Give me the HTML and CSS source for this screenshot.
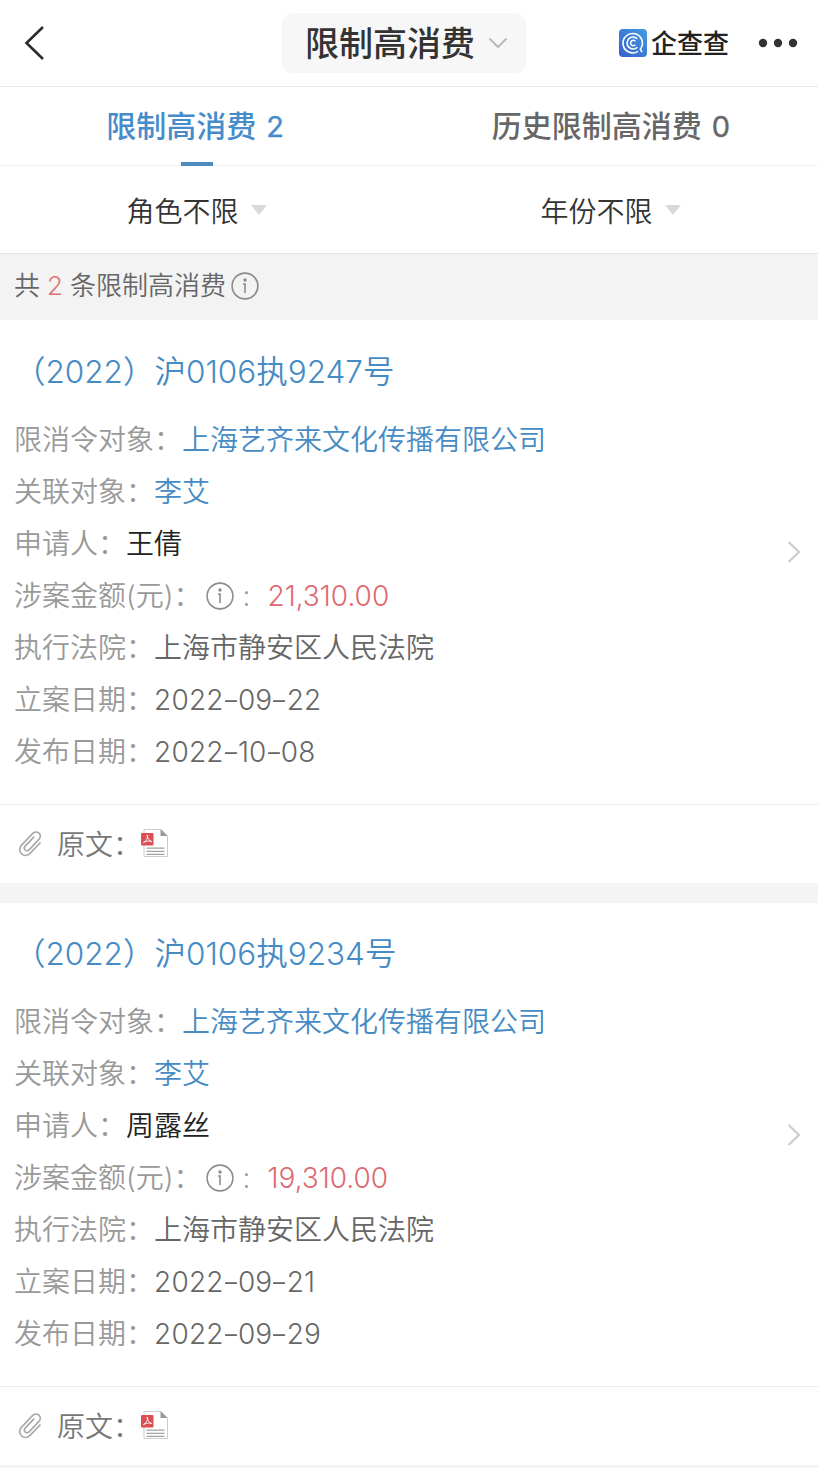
FILE: index.html
```html
<!DOCTYPE html>
<html lang="zh-CN">
<head>
    <meta charset="UTF-8">
    <meta name="viewport" content="width=device-width, initial-scale=1.0">
    <title>限制高消费</title>
    <link rel="stylesheet" href="styles.css">
</head>
<body>
    <svg class="sprite" width="0" height="0">
        <symbol id="info" viewBox="0 0 28 28">
            <circle cx="14" cy="14" r="12.9" fill="none" stroke="currentColor" stroke-width="1.6"/>
            <circle cx="14" cy="8" r="1.7" fill="currentColor"/>
            <path d="M12 12h2v9" fill="none" stroke="currentColor" stroke-width="1.6"/>
        </symbol>
        <symbol id="arrow" viewBox="0 0 14 24">
            <path d="M1.5 2l10.5 10L1.5 22" fill="none" stroke="currentColor" stroke-width="2.2"/>
        </symbol>
        <symbol id="clip" viewBox="0 0 24 28">
            <path d="M22.5 13.5l-10.2 10.7c-2.6 2.7-6.2 3-8.7 .7s-2.5-6 0-8.7L14.5 4.7c1.9-2 4.7-2.3 6.5-.6s1.7 4.4-.1 6.3l-9.6 10.2c-1.3 1.4-3.1 1.5-4.2 .4s-1-2.7 .3-4.1l8.8-9.3" fill="none" stroke="currentColor" stroke-width="1.7"/>
        </symbol>
        <symbol id="pdf" viewBox="0 0 28 30">
            <path d="M3 1.5h17l6.5 6.5v20.5H3z" fill="#fff" stroke="#ccc" stroke-width="1"/>
            <path d="M19.5 1v7h7z" fill="#999"/>
            <path d="M5.5 20.2h18M5.5 23.3h18M5.5 26.3h18" stroke="#a3a3a3" stroke-width="1.3"/>
            <rect x="0" y="5" width="12.5" height="12.5" rx="1" fill="#dd4f55"/>
            <path d="M2.5 14.5c3-1.5 4.5-4.5 3.7-7.5c.2 3.5 2 5.5 4.5 6.5c-3-.8-5.500-.5-8.200 1z" fill="none" stroke="#fff" stroke-width=".9"/>
        </symbol>
    </svg>

    <header class="header">
        <div class="header-side">
            <svg class="back" width="22" height="36" viewBox="0 0 22 36">
                <path d="M20 2L3.500 18L20 34" fill="none" stroke="#2b2b2b" stroke-width="2.6"/>
            </svg>
        </div>
        <div class="header-title">
            <h1>限制高消费</h1>
            <svg width="20" height="12" viewBox="0 0 20 12">
                <path d="M1.5 1.5L10 10l8.5-8.5" fill="none" stroke="#bbb" stroke-width="2"/>
            </svg>
        </div>
        <div class="header-side right">
            <svg class="logo" width="28" height="28" viewBox="0 0 28 28">
                <defs>
                    <linearGradient id="logo-bg" x1="0" y1="1" x2="1" y2="0">
                        <stop offset="0" stop-color="#3560cc"/>
                        <stop offset="1" stop-color="#439be0"/>
                    </linearGradient>
                </defs>
                <rect width="28" height="28" rx="4" fill="url(#logo-bg)"/>
                <g fill="none" stroke="#fff" stroke-width="1.6">
                    <path d="M19 22.3A9.700 9.700 0 1 1 21.300 20.200L23 23.200"/>
                    <path d="M18.300 9.700A6 6 0 1 0 18.300 18.200"/>
                    <path d="M16.300 12.200A2.700 2.700 0 1 0 16.300 15.800"/>
                </g>
            </svg>
            <span class="brand">企查查</span>
            <svg class="more" width="40" height="10" viewBox="0 0 40 10">
                <circle cx="5" cy="5" r="4.2"/>
                <circle cx="20" cy="5" r="4.2"/>
                <circle cx="35" cy="5" r="4.2"/>
            </svg>
        </div>
    </header>

    <nav class="tabs">
        <div class="tab active">限制高消费 <span class="tab-num">2</span></div>
        <div class="tab">历史限制高消费 <span class="tab-num">0</span></div>
    </nav>

    <div class="filters">
        <div class="filter">角色不限<span class="caret"></span></div>
        <div class="filter">年份不限<span class="caret"></span></div>
    </div>

    <div class="summary">
        共<span class="num">2</span>条限制高消费<svg class="info"><use href="#info"/></svg>
    </div>

    <main>
        <section class="card">
            <div class="card-body">
                <h2>（2022）沪0106执9247号</h2>
                <div class="row"><span class="label">限消令对象：</span><a class="link">上海艺齐来文化传播有限公司</a></div>
                <div class="row"><span class="label">关联对象：</span><a class="link">李艾</a></div>
                <div class="row"><span class="label">申请人：</span><span class="name">王倩</span></div>
                <div class="row"><span class="label">涉案金额(元)：</span><svg class="info"><use href="#info"/></svg><span class="colon">:</span><span class="money">21,310.00</span></div>
                <div class="row"><span class="label">执行法院：</span><span>上海市静安区人民法院</span></div>
                <div class="row"><span class="label">立案日期：</span><span class="date">2022<i>–</i>09<i>–</i>22</span></div>
                <div class="row"><span class="label">发布日期：</span><span class="date">2022<i>–</i>10<i>–</i>08</span></div>
                <svg class="arrow"><use href="#arrow"/></svg>
            </div>
            <div class="card-footer">
                <svg class="clip"><use href="#clip"/></svg>
                <span>原文：</span>
                <svg class="pdf"><use href="#pdf"/></svg>
            </div>
        </section>

        <section class="card">
            <div class="card-body">
                <h2>（2022）沪0106执9234号</h2>
                <div class="row"><span class="label">限消令对象：</span><a class="link">上海艺齐来文化传播有限公司</a></div>
                <div class="row"><span class="label">关联对象：</span><a class="link">李艾</a></div>
                <div class="row"><span class="label">申请人：</span><span class="name">周露丝</span></div>
                <div class="row"><span class="label">涉案金额(元)：</span><svg class="info"><use href="#info"/></svg><span class="colon">:</span><span class="money">19,310.00</span></div>
                <div class="row"><span class="label">执行法院：</span><span>上海市静安区人民法院</span></div>
                <div class="row"><span class="label">立案日期：</span><span class="date">2022<i>–</i>09<i>–</i>21</span></div>
                <div class="row"><span class="label">发布日期：</span><span class="date">2022<i>–</i>09<i>–</i>29</span></div>
                <svg class="arrow"><use href="#arrow"/></svg>
            </div>
            <div class="card-footer">
                <svg class="clip"><use href="#clip"/></svg>
                <span>原文：</span>
                <svg class="pdf"><use href="#pdf"/></svg>
            </div>
        </section>
    </main>
</body>
</html>
```
FILE: styles.css
```css
* {
    box-sizing: border-box;
}

body {
    margin: 0;
    background-color: #f4f4f4;
    color: #666;
    font-family: Inter, "Noto Sans CJK SC", sans-serif;
    font-size: 28px;
    font-weight: 350;
    overflow: hidden;
}

h1, h2 {
    margin: 0;
}

svg {
    flex-shrink: 0;
}

.sprite {
    display: block;
    height: 0;
}

.header {
    display: flex;
    align-items: center;
    height: 87px;
    background-color: #fff;
    border-bottom: 1px solid #e8e8e8;
}

.header-side {
    width: 282px;
    padding-left: 23px;
    display: flex;
    align-items: center;
}

.header-side.right {
    flex: 1;
    padding: 0 20px 0 93px;
}

.header-title {
    display: flex;
    align-items: center;
    gap: 13px;
    width: 244px;
    height: 60px;
    padding-left: 23px;
    border-radius: 10px;
    background-color: #f7f7f7;
}

.header-title h1 {
    color: #333;
    font-size: 34px;
    line-height: 60px;
    font-weight: 500;
    padding-top: 2px;
}

.brand {
    margin-left: 4px;
    padding-top: 2px;
    color: #222;
    font-size: 26px;
    line-height: 40px;
    font-weight: 500;
}

.more {
    margin-left: auto;
    fill: #333;
}

.tabs {
    display: flex;
    height: 79px;
    background-color: #fff;
    border-bottom: 1px solid #f0f0f0;
}

.tab {
    position: relative;
    flex: 1;
    padding-right: 26px;
    color: #666;
    font-size: 30px;
    line-height: 79px;
    font-weight: 500;
    text-align: center;
}

.tab + .tab {
    padding-right: 12px;
}

.tab-num {
    display: inline-block;
    margin-left: 2px;
    font-size: 29px;
    font-weight: 400;
    -webkit-text-stroke: .4px currentColor;
}

.tab.active {
    color: #468bca;
}

.tab.active::after {
    content: "";
    position: absolute;
    left: 181px;
    bottom: -1px;
    width: 32px;
    height: 4px;
    background-color: #4e8bbf;
}

.filters {
    display: flex;
    height: 88px;
    background-color: #fff;
    border-bottom: 1px solid #e6e6e6;
}

.filter {
    flex: 1;
    display: flex;
    align-items: center;
    justify-content: center;
    padding-right: 21px;
    color: #333;
}

.filter + .filter {
    padding-right: 11px;
}

.caret {
    margin-left: 12px;
    border: 8px solid transparent;
    border-top: 10px solid #d9d9d9;
    border-bottom: 0;
}

.summary {
    display: flex;
    align-items: center;
    height: 66px;
    padding: 0 0 2px 14px;
    background-color: #f3f3f3;
    font-size: 26px;
    line-height: 60px;
}

.num {
    margin: 0 7px;
    color: #e07070;
}

.info {
    width: 28px;
    height: 28px;
    color: #8c8c8c;
}

.summary .info {
    margin-left: 5px;
}

.card {
    margin-bottom: 20px;
    background-color: #fff;
}

.card-body {
    position: relative;
    height: 484px;
    padding: 26px 15px 0 14px;
}

.card + .card .card-body {
    height: 483px;
    padding-top: 25px;
}

.card h2 {
    height: 68px;
    color: #468bc4;
    font-size: 31.5px;
    line-height: 52px;
    font-weight: 350;
}

.row {
    display: flex;
    align-items: center;
    height: 52px;
    line-height: 52px;
}

.row .info {
    margin-left: 4px;
}

.label {
    color: #999;
}

.link {
    color: #468bc4;
}

.name {
    color: #222;
}

.colon {
    width: 34px;
    padding-left: 9px;
    color: #999;
}

.money {
    color: #dc6a70;
}

.date {
    letter-spacing: .2px;
}

.date i {
    display: inline-block;
    font-style: normal;
    transform: scaleX(.85);
}

.arrow {
    position: absolute;
    top: 220px;
    right: 17px;
    width: 14px;
    height: 24px;
    color: #ccc;
}

.card-footer {
    display: flex;
    align-items: center;
    height: 79px;
    padding: 0 0 2px 18px;
    border-top: 1px solid #ececec;
    color: #777;
}

.clip {
    width: 24px;
    height: 28px;
    margin-right: 15px;
    color: #aaa;
}

.pdf {
    width: 28px;
    height: 30px;
}
```
